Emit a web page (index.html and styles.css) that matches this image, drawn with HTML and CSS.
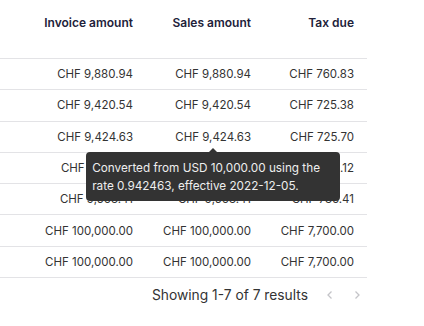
FILE: index.html
```html
<!DOCTYPE html>
<html lang="en">
<head>
    <title>Invoices</title>
    <meta charset="utf-8">
    <link rel="stylesheet" href="styles.css">
</head>
<body>
<div class="ledger">
    <div class="row row-head">
        <div class="cell">Invoice amount</div>
        <div class="cell">Sales amount</div>
        <div class="cell">Tax due</div>
    </div>
    <div class="row">
        <div class="cell">CHF 9,880.94</div>
        <div class="cell">CHF 9,880.94</div>
        <div class="cell">CHF 760.83</div>
    </div>
    <div class="row">
        <div class="cell">CHF 9,420.54</div>
        <div class="cell">CHF 9,420.54</div>
        <div class="cell">CHF 725.38</div>
    </div>
    <div class="row">
        <div class="cell">CHF 9,424.63</div>
        <div class="cell">
            <span class="has-tip">CHF 9,424.63
                <span class="tip">Converted from USD 10,000.00 using the rate 0.942463, effective 2022-12-05.</span>
            </span>
        </div>
        <div class="cell">CHF 725.70</div>
    </div>
    <div class="row">
        <div class="cell">CHF 9,592.12</div>
        <div class="cell">CHF 9,592.12</div>
        <div class="cell">CHF 738.12</div>
    </div>
    <div class="row">
        <div class="cell">CHF 9,563.41</div>
        <div class="cell">CHF 9,563.41</div>
        <div class="cell">CHF 736.41</div>
    </div>
    <div class="row">
        <div class="cell">CHF 100,000.00</div>
        <div class="cell">CHF 100,000.00</div>
        <div class="cell">CHF 7,700.00</div>
    </div>
    <div class="row">
        <div class="cell">CHF 100,000.00</div>
        <div class="cell">CHF 100,000.00</div>
        <div class="cell">CHF 7,700.00</div>
    </div>
    <div class="pager">
        <span class="pager-text">Showing 1-7 of 7 results</span>
        <button class="pager-btn" type="button">
            <svg width="12" height="12" viewBox="0 0 12 12"><path d="M7.5 2.5 4 6l3.5 3.5" fill="none" stroke="currentColor" stroke-width="1.3"/></svg>
        </button>
        <button class="pager-btn pager-last" type="button">
            <svg width="12" height="12" viewBox="0 0 12 12"><path d="M4.5 2.5 8 6 4.5 9.5" fill="none" stroke="currentColor" stroke-width="1.3"/></svg>
        </button>
    </div>
</div>
</body>
</html>
```

FILE: styles.css
```css
body {
    margin: 0;
    font-family: Inter, "Noto Sans", sans-serif;
    background: #fff;
}

.ledger {
    width: 367px;
}

.row {
    display: grid;
    grid-template-columns: 146px 118px 103px;
    height: 31.29px;
    box-sizing: border-box;
    border-top: 1px solid #e3e3e6;
    font-size: 11.5px;
    color: #333;
}

.row-head {
    height: 58px;
    border-top: none;
    padding-top: 15px;
    align-items: start;
    font-size: 12px;
    font-weight: 600;
    color: #22223a;
}

.cell {
    text-align: right;
    padding-right: 13px;
    align-self: center;
    line-height: 16px;
}

.row-head .cell {
    align-self: start;
}

.has-tip {
    position: relative;
}

.tip {
    position: absolute;
    top: 22px;
    left: 50%;
    margin-left: -127px;
    width: 254px;
    box-sizing: border-box;
    padding: 7px 6px 6px 6px;
    background: #333;
    color: #eee;
    border-radius: 4px;
    text-align: left;
    line-height: 18px;
    font-size: 11.75px;
    z-index: 2;
}

.tip::before {
    content: "";
    position: absolute;
    top: -4px;
    left: 50%;
    margin-left: -4px;
    border-left: 4px solid transparent;
    border-right: 4px solid transparent;
    border-bottom: 4px solid #333;
}

.pager {
    display: flex;
    justify-content: flex-end;
    align-items: center;
    border-top: 1px solid #e3e3e6;
    height: 34px;
    font-size: 13.8px;
    color: #333;
}

.pager-text {
    margin-right: 8px;
}

.pager-btn {
    border: none;
    background: none;
    padding: 0;
    width: 27px;
    height: 16px;
    color: #c4c4c8;
    display: flex;
    align-items: center;
    justify-content: center;
}

.pager-last {
    margin-right: -3px;
}
```
